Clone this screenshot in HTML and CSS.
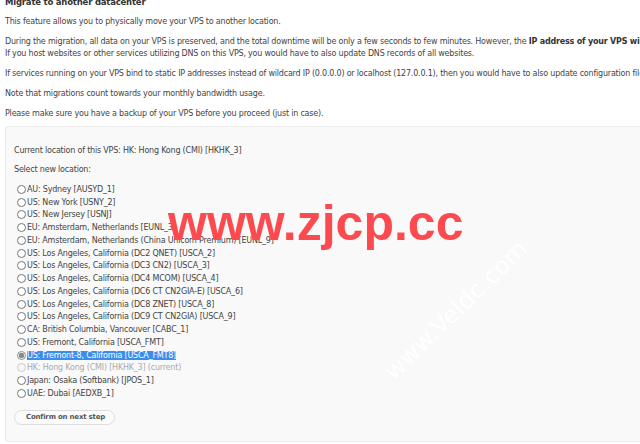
FILE: index.html
```html
<!DOCTYPE html>
<html>
    <head>
        <title>Migrate to another datacenter</title>
        <link rel="stylesheet" href="styles.css">
    </head>
    <body>
        <div class="page">
            <h2>Migrate to another datacenter</h2>
            <p>This feature allows you to physically move your VPS to another location.</p>
            <p>During the migration, all data on your VPS is preserved, and the total downtime will be only a few seconds to few minutes. However, the <b>IP address of your VPS will change</b>.<br>
            If you host websites or other services utilizing DNS on this VPS, you would have to also update DNS records of all websites.</p>
            <p>If services running on your VPS bind to static IP addresses instead of wildcard IP (0.0.0.0) or localhost (127.0.0.1), then you would have to also update configuration files of those services.</p>
            <p>Note that migrations count towards your monthly bandwidth usage.</p>
            <p>Please make sure you have a backup of your VPS before you proceed (just in case).</p>

            <form class="panel">
                <p>Current location of this VPS: HK: Hong Kong (CMI) [HKHK_3]</p>
                <p>Select new location:</p>
                <div class="locations">
                    <label><input type="radio" name="loc">AU: Sydney [AUSYD_1]</label>
                    <label><input type="radio" name="loc">US: New York [USNY_2]</label>
                    <label><input type="radio" name="loc">US: New Jersey [USNJ]</label>
                    <label><input type="radio" name="loc">EU: Amsterdam, Netherlands [EUNL_3]</label>
                    <label><input type="radio" name="loc">EU: Amsterdam, Netherlands (China Unicom Premium) [EUNL_9]</label>
                    <label><input type="radio" name="loc">US: Los Angeles, California (DC2 QNET) [USCA_2]</label>
                    <label><input type="radio" name="loc">US: Los Angeles, California (DC3 CN2) [USCA_3]</label>
                    <label><input type="radio" name="loc">US: Los Angeles, California (DC4 MCOM) [USCA_4]</label>
                    <label><input type="radio" name="loc">US: Los Angeles, California (DC6 CT CN2GIA-E) [USCA_6]</label>
                    <label><input type="radio" name="loc">US: Los Angeles, California (DC8 ZNET) [USCA_8]</label>
                    <label><input type="radio" name="loc">US: Los Angeles, California (DC9 CT CN2GIA) [USCA_9]</label>
                    <label><input type="radio" name="loc">CA: British Columbia, Vancouver [CABC_1]</label>
                    <label><input type="radio" name="loc">US: Fremont, California [USCA_FMT]</label>
                    <label><input type="radio" name="loc" checked><span class="picked">US: Fremont-8, California [USCA_FMT8]</span></label>
                    <label class="current"><input type="radio" name="loc" disabled>HK: Hong Kong (CMI) [HKHK_3] (current)</label>
                    <label><input type="radio" name="loc">Japan: Osaka (Softbank) [JPOS_1]</label>
                    <label><input type="radio" name="loc">UAE: Dubai [AEDXB_1]</label>
                </div>
                <button type="button" class="confirm">Confirm on next step</button>
            </form>
        </div>
        <div class="mark">www.zjcp.cc</div>
        <div class="mark2">www.Veldc.com</div>
    </body>
</html>
```
FILE: styles.css
```css
body
{
    margin:0;
    background:#fff;
    font-family:"DejaVu Sans",sans-serif;
    font-size:8px;
    letter-spacing:-0.2px;
    color:#444;
    overflow:hidden;
    width:640px;
    height:444px;
    position:relative;
}
.page
{
    width:1000px;
    padding:0 0 0 5px;
    margin-top:-4px;
}
h2
{
    margin:0 0 8px 0;
    font-size:8.5px;
    line-height:12px;
    color:#333;
}
p
{
    margin:0 0 8px 0;
    line-height:12px;
    white-space:nowrap;
}
.page > p:last-of-type
{
    margin-bottom:0;
}
b
{
    color:#333;
}
.panel
{
    margin-top:6px;
    background:#f9f9f9;
    border:1px solid #ececec;
    border-radius:3px;
    padding:18px 8px 16px 8px;
}
.panel p
{
    margin-bottom:7px;
}
.locations
{
    display:flex;
    flex-direction:column;
    align-items:flex-start;
    margin:0 0 10px 3px;
}
.locations label
{
    display:flex;
    align-items:center;
    height:12.75px;
}
.locations input
{
    width:9px;
    height:9px;
    margin:0 1px 0 0;
    accent-color:#8a8a8a;
}
.picked
{
    background:#3b8ded;
    color:#fff;
}
.current
{
    color:#aaa;
}
.confirm
{
    font-family:"DejaVu Sans",sans-serif;
    font-size:7px;
    letter-spacing:-0.2px;
    font-weight:bold;
    color:#555;
    background:#fbfbfb;
    border:1px solid #ddd;
    border-radius:8px;
    height:15px;
    padding:0 9px 0 11px;
}
.mark
{
    position:absolute;
    left:168px;
    top:194px;
    font-family:"Liberation Sans",sans-serif;
    font-weight:bold;
    font-size:50px;
    letter-spacing:0;
    color:#fd4a4e;
}
.mark2
{
    position:absolute;
    left:362px;
    top:296px;
    font-family:"DejaVu Sans",sans-serif;
    font-size:24px;
    letter-spacing:0;
    color:#fff;
    transform:rotate(-44deg);
}
```
